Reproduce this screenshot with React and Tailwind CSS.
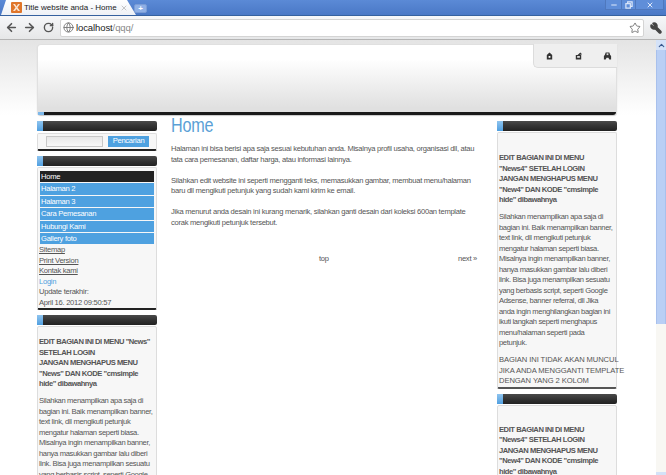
import React from 'react';
import { ArrowLeft, ArrowRight, RotateCw, Star, Wrench, Globe, ChevronUp, ChevronDown, Minus, X } from 'lucide-react';

const menuItems = ['Halaman 2', 'Halaman 3', 'Cara Pemesanan', 'Hubungi Kami', 'Gallery foto'];

const SideBar = () => (
  <div className="flex h-[10px] shrink-0">
    <div className="w-[6px] bg-gradient-to-b from-[#8fc4ee] to-[#4f9fe0]" />
    <div className="flex-1 rounded-r-[2px] bg-gradient-to-b from-[#4a4a4a] via-[#333333] to-[#222222]" />
  </div>
);

// sidebar text keeps the line breaks of the original
const Lines = ({ lines, className }) => (
  <div className={`whitespace-nowrap ${className}`}>
    {lines.map((line) => (
      <div key={line}>{line}</div>
    ))}
  </div>
);

const newsHead = ['EDIT BAGIAN INI DI MENU "News"', 'SETELAH LOGIN', 'JANGAN MENGHAPUS MENU', '"News" DAN KODE "cmsimple', 'hide" dibawahnya'];
const news4Head = ['EDIT BAGIAN INI DI MENU', '"News4" SETELAH LOGIN', 'JANGAN MENGHAPUS MENU', '"New4" DAN KODE "cmsimple', 'hide" dibawahnya'];
const bodyStart = [
  'Silahkan menampilkan apa saja di',
  'bagian ini. Baik menampilkan banner,',
  'text link, dll mengikuti petunjuk',
  'mengatur halaman seperti biasa.',
  'Misalnya ingin menampilkan banner,',
  'hanya masukkan gambar lalu diberi',
  'link. Bisa juga menampilkan sesuatu',
  'yang berbasis script, seperti Google',
];
const bodyEnd = [
  'Adsense, banner referral, dll Jika',
  'anda ingin menghilangkan bagian ini',
  'ikuti langkah seperti menghapus',
  'menu/halaman seperti pada',
  'petunjuk.',
];
const notice = ['BAGIAN INI TIDAK AKAN MUNCUL', 'JIKA ANDA MENGGANTI TEMPLATE', 'DENGAN YANG 2 KOLOM'];

const HeadIcon = ({ children }) => (
  <svg width="9" height="10" viewBox="0 0 10 10" fill="#333333">{children}</svg>
);

const App = () => {
  return (
    <div className="w-[666px] h-[475px] overflow-hidden flex flex-col bg-white font-['Liberation_Sans',Arial,sans-serif]">
      {/* title bar */}
      <div className="h-[16px] shrink-0 flex items-end bg-gradient-to-b from-[#5b8ad6] to-[#4a78c6] border-b border-[#35619f] relative">
        <div className="ml-[1px] w-[135px] h-[15px] bg-gradient-to-b from-white to-[#eef1f6] flex items-center pl-[10px] pr-[6px] gap-[2px] [clip-path:polygon(0_100%,5px_0,126px_0,100%_100%)]">
          <svg width="11" height="11" viewBox="0 0 11 11" className="shrink-0">
            <rect width="11" height="11" rx="1" fill="#e0762a" />
            <path d="M2 2h2l1.500 2.500L7 2h2L6.500 5.500 9 9H7L5.500 7 4 9H2l2.500-3.500z" fill="#fbe3cf" />
          </svg>
          <span className="text-[8px] leading-none text-[#222222] whitespace-nowrap flex-1">Title website anda - Home</span>
          <X size={8} className="text-[#aaaaaa] mr-[2px]" />
        </div>
        <div className="mb-[2px] ml-[-2px] w-[13px] h-[9px] rounded-[2px] bg-[#8fb0e6] border border-[#7a9cd6] flex items-center justify-center text-[8px] leading-none text-white font-bold">+</div>
        <div className="absolute right-[2px] top-0 flex h-[10px]">
          <div className="w-[17px] bg-[#5f8ed9] border border-t-0 border-[#4f78bd] flex items-center justify-center"><Minus size={8} strokeWidth={3} className="text-[#dfe9fa]" /></div>
          <div className="w-[14px] bg-[#5f8ed9] border border-t-0 border-l-0 border-[#4f78bd] flex items-center justify-center">
            <svg width="8" height="8" viewBox="0 0 9 9" fill="none" stroke="#dfe9fa" strokeWidth="1.300"><rect x="1" y="3" width="5" height="5" /><path d="M3 3V1h5v5H6" /></svg>
          </div>
          <div className="w-[28px] bg-[#5f8ed9] border border-t-0 border-l-0 border-[#4f78bd] flex items-center justify-center"><X size={8} strokeWidth={3} className="text-[#dfe9fa]" /></div>
        </div>
      </div>

      {/* toolbar */}
      <div className="h-[24px] shrink-0 flex items-center bg-gradient-to-b from-[#f6f7f9] to-[#e6e7e8] border-b border-[#b5b5b5] pl-[5px] pr-[4px]">
        <ArrowLeft size={13} strokeWidth={3} className="text-[#555555]" />
        <ArrowRight size={13} strokeWidth={3} className="text-[#555555] ml-[5px]" />
        <RotateCw size={11} strokeWidth={3} className="text-[#555555] ml-[7px]" />
        <div className="ml-[6px] flex-1 h-[18px] bg-white rounded-[2px] border border-[#d4d4d4] flex items-center pl-[2px] pr-[1px]">
          <Globe size={11} className="text-[#777777]" />
          <span className="ml-[2px] text-[9.500px] tracking-[-0.1px] leading-none text-[#222222]">localhost<span className="text-[#888888]">/qqq/</span></span>
          <Star size={12} strokeWidth={1.500} className="ml-auto mr-[1px] text-[#555555]" />
        </div>
        <Wrench size={12} strokeWidth={3} fill="#444444" className="ml-[6px] text-[#444444] -scale-x-100" />
      </div>

      <div className="flex-1 min-h-0 flex">
        {/* page */}
        <div className="flex-1 min-w-0 overflow-hidden bg-[linear-gradient(to_bottom,#e4e4e4_0px,#ffffff_75px)] pt-[4px] pl-[37px] text-[7.600px] tracking-[-0.28px] leading-[10.500px] text-[#555555]">
          <div className="w-[580px] flex flex-col gap-[6px]">
            {/* header */}
            <div className="h-[71px] rounded-[4px] rounded-tr-none bg-[linear-gradient(to_bottom,#ffffff_0%,#ffffff_20%,#e0e0e0_90%)] border-t border-l border-r border-[#e0e0e0] shadow-[0_1px_1px_#c8c8c8] flex flex-col relative">
              <div className="absolute right-[-1px] top-[-1px] w-[84px] h-[24px] bg-[#efefef] rounded-bl-[5px] border-l border-b border-[#dcdcdc] flex items-center pl-[11px] gap-[20px]">
                <HeadIcon><path d="M5 1 8 4v5H2V4z" /><path d="M4 5h2v2H4z" fill="#ffffff" /></HeadIcon>
                <HeadIcon><path d="M7 1 9 3 6 4H8v5H2V4h2z" /><path d="M3.500 5h3v2h-3z" fill="#dddddd" /></HeadIcon>
                <HeadIcon><path d="M3 1h4l1 3 1 1v4H7L6 7H4L3 9H1V5l1-1z" /><path d="M4 2h2v2H4z" fill="#dddddd" /></HeadIcon>
              </div>
              <div className="mt-auto h-[3px] flex">
                <div className="w-[6px] bg-[#7db8ea]" />
                <div className="flex-1 bg-[#1a1a1a] rounded-br-[3px]" />
              </div>
            </div>

            <div className="flex items-start">
              {/* left column */}
              <div className="w-[120px] shrink-0 flex flex-col">
                <SideBar />
                <div className="mt-[2px] h-[18px] rounded-[2px] border-x border-t border-[#dddddd] border-b-2 border-b-[#222222] bg-[#f7f7f7] flex items-center pl-[8px] gap-[5px]">
                  <div className="w-[57px] h-[11px] bg-gradient-to-b from-[#e8e8e8] to-[#f8f8f8] border border-[#c8c8c8]" />
                  <div className="w-[41px] h-[11px] bg-[#4ea1e0] flex items-center justify-center text-white">Pencarian</div>
                </div>
                <div className="mt-[5px]"><SideBar /></div>
                <div className="mt-[1px] rounded-[2px] border-x border-t border-[#dddddd] border-b-2 border-b-[#222222] bg-[#f7f7f7] pt-[3px] px-[1px]">
                  <div className="flex flex-col gap-[1px] mx-[1px]">
                    <div className="h-[11.400px] bg-[#222222] text-white pl-[1px] leading-[11.400px]">Home</div>
                    {menuItems.map((item) => (
                      <div key={item} className="h-[11.400px] bg-[#4ea1e0] text-white pl-[1px] leading-[11.400px]">{item}</div>
                    ))}
                  </div>
                  <div className="mt-[1px] flex flex-col">
                    <a className="underline">Sitemap</a>
                    <a className="underline">Print Version</a>
                    <a className="underline">Kontak kami</a>
                    <a className="text-[#4ea1e0]">Login</a>
                    <span>Update terakhir:</span>
                    <span>April 16. 2012 09:50:57</span>
                  </div>
                </div>
                <div className="mt-[5px]"><SideBar /></div>
                <div className="mt-[1px] rounded-[2px] border border-[#dddddd] bg-[#f7f7f7] pt-[10px] pl-[1px] h-[160px] overflow-hidden flex flex-col gap-[6.500px]">
                  <Lines lines={newsHead} className="font-bold tracking-[-0.45px]" />
                  <Lines lines={bodyStart} className="tracking-[-0.35px]" />
                </div>
              </div>

              {/* content */}
              <div className="w-[307px] shrink-0 ml-[14px] mt-[-7px]">
                <h1 className="text-[20px] leading-[23px] text-[#5a9fd6] origin-left scale-x-[0.81]">Home</h1>
                <p className="mt-[7px]">Halaman ini bisa berisi apa saja sesuai kebutuhan anda. Misalnya profil usaha, organisasi dll, atau tata cara pemesanan, daftar harga, atau informasi lainnya.</p>
                <p className="mt-[10.500px]">Silahkan edit website ini seperti mengganti teks, memasukkan gambar, membuat menu/halaman baru dll mengikuti petunjuk yang sudah kami kirim ke email.</p>
                <p className="mt-[10.500px]">Jika menurut anda desain ini kurang menarik, silahkan ganti desain dari koleksi 600an template corak mengikuti petunjuk tersebut.</p>
                <div className="mt-[26px] flex">
                  <span className="ml-[148px]">top</span>
                  <span className="ml-auto mr-[1px]">next »</span>
                </div>
              </div>

              {/* right column */}
              <div className="w-[120px] shrink-0 ml-[19px] flex flex-col">
                <SideBar />
                <div className="mt-[1px] rounded-[2px] border-x border-t border-[#dddddd] border-b-2 border-b-[#555555] bg-[#f7f7f7] pt-[20px] pl-[1px] flex flex-col gap-[6.500px]">
                  <Lines lines={news4Head} className="font-bold tracking-[-0.45px]" />
                  <Lines lines={[...bodyStart, ...bodyEnd]} className="tracking-[-0.35px]" />
                  <Lines lines={notice} className="tracking-[-0.08px]" />
                </div>
                <div className="mt-[5px]"><SideBar /></div>
                <div className="mt-[1px] rounded-[2px] border border-[#dddddd] bg-[#f7f7f7] pt-[19px] pl-[1px] h-[80px] overflow-hidden">
                  <Lines lines={news4Head} className="font-bold tracking-[-0.45px]" />
                </div>
              </div>
            </div>
          </div>
        </div>

        {/* scrollbar */}
        <div className="w-[10px] shrink-0 flex flex-col overflow-hidden bg-[#f8f7f3]">
          <div className="h-[10px] shrink-0 bg-[#d4e2f8] flex items-center justify-center"><ChevronUp size={9} strokeWidth={3} className="text-[#3a5a90]" /></div>
          <div className="h-[274px] shrink-0 bg-[#b9cff5] border-x border-[#a8c0ec]" />
          <div className="h-[148px] shrink-0" />
          <div className="h-[10px] shrink-0 bg-[#d4e2f8] flex items-center justify-center"><ChevronDown size={9} strokeWidth={3} className="text-[#3a5a90]" /></div>
        </div>
      </div>
    </div>
  );
};

export default App;
